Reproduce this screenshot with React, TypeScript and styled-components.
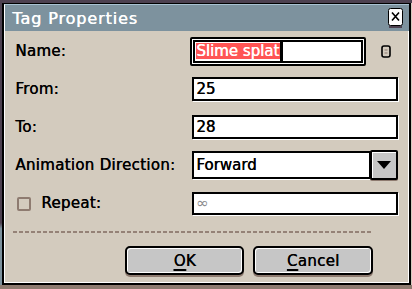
import React from "react";
import styled, { createGlobalStyle } from "styled-components";

const Global = createGlobalStyle`
  html, body { margin: 0; padding: 0; background: #4d4150; }
  * { box-sizing: border-box; }
`;

const FONT = `"DejaVu Sans", "Liberation Sans", sans-serif`;

const Screen = styled.div`
  width: 412px;
  height: 289px;
  display: flex;
  flex-direction: column;
  overflow: hidden;
  font-family: ${FONT};
`;

const TopStrip = styled.div`
  height: 3px;
  background: #4d4150;
`;

const Middle = styled.div`
  flex: 1;
  display: flex;
  min-height: 0;
`;

const SideStrip = styled.div<{ $w: number }>`
  width: ${(p) => p.$w}px;
  background: linear-gradient(#4d4150 0%, #4d4150 78%, #7d929e 80%, #7d929e 100%);
`;

const RightStrip = styled.div`
  width: 1px;
  background: #d3cbbe;
`;

const BottomStrip = styled.div`
  height: 4px;
  background: #8e7b70;
`;

const Dialog = styled.div`
  flex: 1;
  display: flex;
  flex-direction: column;
  border: 2px solid #000;
  border-top-width: 1px;
  background: #d3cbbe;
  box-shadow: inset 1px 0 0 #fff, inset -1px -1px 0 #fff;
`;

const TitleBar = styled.div`
  height: 27px;
  display: flex;
  align-items: center;
  justify-content: space-between;
  background: #7d929e;
  border-top: 1px solid #a9c3d3;
  border-left: 1px solid #fff;
  padding: 0 6px 0 7px;
`;

const Title = styled.span`
  color: #fff;
  font-size: 16px;
  letter-spacing: 0.9px;
  line-height: 1;
  margin-top: 1px;
  text-shadow: 0.4px 0 0 #fff;
`;

const CloseBtn = styled.div`
  width: 15px;
  height: 20px;
  display: flex;
  align-items: flex-start;
`;

const Body = styled.div`
  flex: 1;
  display: flex;
  flex-direction: column;
  padding: 1px 11px 0 11px;
`;

const Row = styled.div`
  height: 38px;
  display: grid;
  grid-template-columns: 177px 1fr;
  align-items: center;
`;

const Label = styled.div`
  font-size: 15px;
  color: #000;
  letter-spacing: 0.3px;
  display: flex;
  align-items: center;
  gap: 10px;
  text-shadow: 0.4px 0 0 #000;
`;

const FieldCell = styled.div`
  display: flex;
  align-items: center;
`;

const Field = styled.div<{ $h?: number; $w?: number }>`
  height: ${(p) => p.$h ?? 24}px;
  width: ${(p) => (p.$w ? `${p.$w}px` : "100%")};
  background: #fff;
  border: 2px solid #000;
  display: flex;
  align-items: center;
  padding-left: 2px;
  font-size: 15px;
  color: #000;
  text-shadow: 0.4px 0 0 #000;
  box-shadow: 1px 1px 0 #fff;
`;

const FocusField = styled(Field)`
  margin-left: -2px;
  border-radius: 2px;
  padding-left: 4px;
  text-shadow: none;
  box-shadow: inset 0 0 0 1px #fff, inset 0 0 0 3px #000;
`;

const Selection = styled.span`
  background: #ff5555;
  color: #fff;
  height: 16px;
  line-height: 16px;
  padding-right: 1px;
  text-shadow: 0.4px 0 0 #fff;
`;

const Caret = styled.span`
  width: 3px;
  height: 20px;
  background: #000;
`;

const Placeholder = styled.span`
  color: #8c8c8c;
  text-shadow: none;
`;

const UserDataIcon = styled.div`
  margin-left: 15px;
  display: flex;
`;

const ComboBtn = styled.div`
  width: 28px;
  height: 30px;
  margin-left: -1px;
  background: #c6c6c6;
  border: 2px solid #000;
  border-radius: 2px;
  box-shadow: inset 1px 1px 0 #fff, 0 1px 0 #8e7b70;
  display: flex;
  align-items: center;
  justify-content: center;
`;

const Check = styled.span`
  width: 14px;
  height: 14px;
  border: 2px solid #8e7b70;
  border-radius: 2px;
  margin-left: 2px;
  margin-top: 1px;
`;

const Separator = styled.div`
  margin-top: 9px;
  margin-left: -2px;
  width: 359px;
  height: 2px;
  background: repeating-linear-gradient(90deg, #958277 0 4px, transparent 4px 6px);
`;

const ButtonRow = styled.div`
  margin-top: 13px;
  display: flex;
  gap: 9px;
  padding-left: 110px;
`;

const Button = styled.div<{ $w: number }>`
  width: ${(p) => p.$w}px;
  height: 29px;
  background: #c6c6c6;
  border: 2px solid #000;
  border-radius: 5px;
  box-shadow: inset 1px 1px 0 #fff, inset -1px -1px 0 #fff, 0 2px 0 #8e7b70;
  display: flex;
  align-items: center;
  justify-content: center;
  font-size: 15px;
  color: #000;
  letter-spacing: 0.3px;
  text-shadow: 0.4px 0 0 #000;
  u { text-decoration-thickness: 2px; text-underline-offset: 3px; }
`;

export default function App() {
  return (
    <Screen>
      <Global />
      <TopStrip />
      <Middle>
        <SideStrip $w={3} />
        <Dialog>
          <TitleBar>
            <Title>Tag Properties</Title>
            <CloseBtn>
              <svg width="15" height="20" viewBox="0 0 15 20">
                <rect x="0.5" y="0.5" width="14" height="17" rx="2" fill="#fff" stroke="#000" />
                <rect x="1" y="18" width="13" height="2" fill="#4d4150" />
                <path d="M4 4.5 L11 12.5 M11 4.5 L4 12.5" stroke="#000" strokeWidth="1.6" />
              </svg>
            </CloseBtn>
          </TitleBar>
          <Body>
            <Row>
              <Label>Name:</Label>
              <FieldCell>
                <FocusField $h={29} $w={176}>
                  <Selection>Slime splat</Selection>
                  <Caret />
                </FocusField>
                <UserDataIcon>
                  <svg width="10" height="13" viewBox="0 0 10 13">
                    <rect x="1" y="1" width="8" height="11" rx="2" fill="#d3cbbe" stroke="#000" strokeWidth="1.6" />
                    <path d="M3.5 5 H6.5 M3.5 8 H6.5" stroke="#8e7b70" strokeWidth="1.2" />
                  </svg>
                </UserDataIcon>
              </FieldCell>
            </Row>
            <Row>
              <Label>From:</Label>
              <FieldCell>
                <Field>25</Field>
              </FieldCell>
            </Row>
            <Row>
              <Label>To:</Label>
              <FieldCell>
                <Field>28</Field>
              </FieldCell>
            </Row>
            <Row>
              <Label>Animation Direction:</Label>
              <FieldCell>
                <Field $h={28} $w={179}>Forward</Field>
                <ComboBtn>
                  <svg width="14" height="8" viewBox="0 0 14 8">
                    <path d="M0 0 H14 L7 8 Z" fill="#000" />
                  </svg>
                </ComboBtn>
              </FieldCell>
            </Row>
            <Row>
              <Label>
                <Check />
                Repeat:
              </Label>
              <FieldCell>
                <Field $h={23}>
                  <Placeholder>∞</Placeholder>
                </Field>
              </FieldCell>
            </Row>
            <Separator />
            <ButtonRow>
              <Button $w={119}>
                <span><u>O</u>K</span>
              </Button>
              <Button $w={120}>
                <span><u>C</u>ancel</span>
              </Button>
            </ButtonRow>
          </Body>
        </Dialog>
        <RightStrip />
      </Middle>
      <BottomStrip />
    </Screen>
  );
}
